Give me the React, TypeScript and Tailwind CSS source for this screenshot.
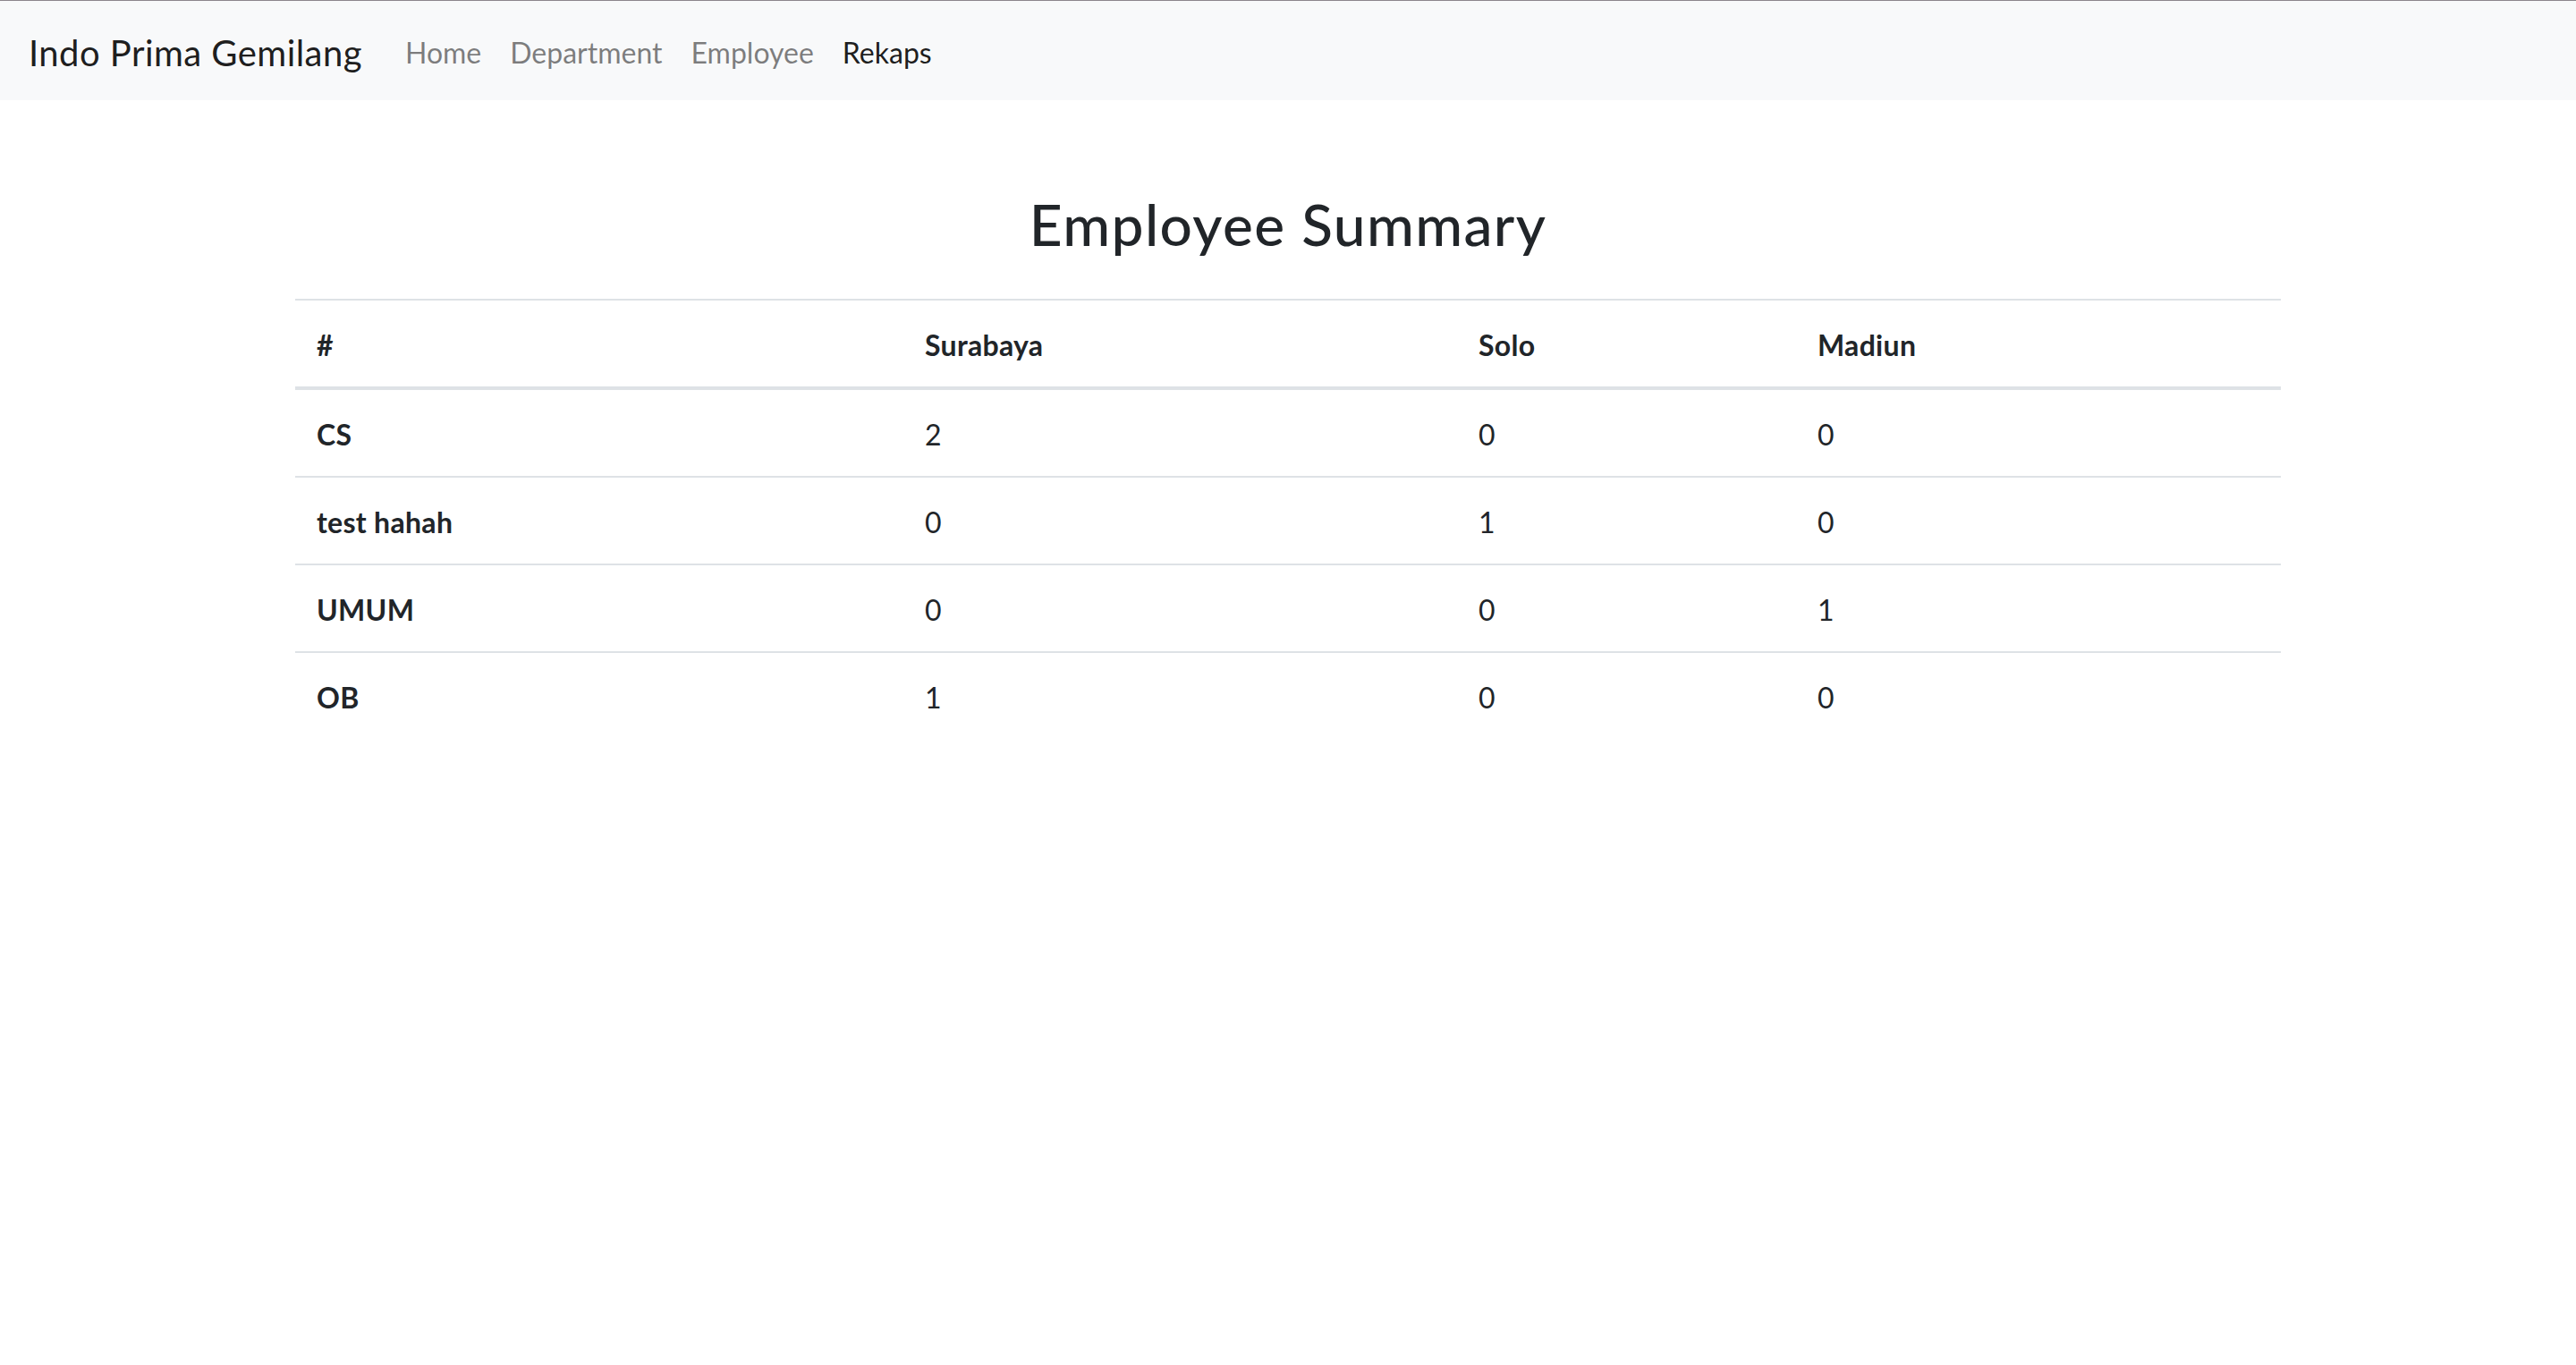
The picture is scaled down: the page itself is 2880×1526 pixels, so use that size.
import React from "react";

const font = { fontFamily: "Lato, 'Noto Sans', sans-serif" };

const links = [
  { name: "Home", active: false },
  { name: "Department", active: false },
  { name: "Employee", active: false },
  { name: "Rekaps", active: true },
];

const cities = ["Surabaya", "Solo", "Madiun"];

const rows = [
  { dept: "CS", counts: [2, 0, 0] },
  { dept: "test hahah", counts: [0, 1, 0] },
  { dept: "UMUM", counts: [0, 0, 1] },
  { dept: "OB", counts: [1, 0, 0] },
];

const colWidths = ["w-[680px]", "w-[619px]", "w-[379px]", "w-[542px]"];

function Navbar() {
  return (
    <nav className="flex h-[112px] items-center border-t border-[#8c868c] bg-[#f8f9fa] px-[32px]">
      <a className="mr-[32px] pt-[12px] pb-[8px] text-[40px] leading-[60px] tracking-[0.45px] text-black/90">
        Indo Prima Gemilang
      </a>
      <ul className="flex items-center">
        {links.map((l) => (
          <li key={l.name}>
            <a
              className={
                l.active
                  ? "block px-[16px] pt-[18px] pb-[14px] text-[32px] leading-[48px] text-black/90"
                  : "block px-[16px] pt-[18px] pb-[14px] text-[32px] leading-[48px] text-black/50"
              }
            >
              {l.name}
            </a>
          </li>
        ))}
      </ul>
    </nav>
  );
}

export default function App() {
  return (
    <div className="min-h-screen bg-white text-[#212529]" style={font}>
      <Navbar />
      <div className="mx-auto w-[2280px] px-[30px]">
        <h2 className="mt-[100px] text-center text-[64px] font-medium leading-[77px] tracking-[1.4px]">
          Employee Summary
        </h2>
        <table className="mt-[45px] w-full table-fixed border-collapse text-[32px] leading-[48px] tracking-[0.3px]">
          <colgroup>
            {colWidths.map((w, i) => (
              <col key={i} className={w} />
            ))}
          </colgroup>
          <thead>
            <tr>
              <th className="border-t-2 border-b-4 border-[#dee2e6] px-[24px] pt-[26px] pb-[22px] text-left font-bold">#</th>
              {cities.map((c) => (
                <th
                  key={c}
                  className="border-t-2 border-b-4 border-[#dee2e6] px-[24px] pt-[26px] pb-[22px] text-left font-bold"
                >
                  {c}
                </th>
              ))}
            </tr>
          </thead>
          <tbody>
            {rows.map((r) => (
              <tr key={r.dept}>
                <th className="border-t-2 border-[#dee2e6] px-[24px] pt-[26px] pb-[22px] text-left font-bold">
                  {r.dept}
                </th>
                {r.counts.map((n, i) => (
                  <td key={i} className="border-t-2 border-[#dee2e6] px-[24px] pt-[26px] pb-[22px]">
                    {n}
                  </td>
                ))}
              </tr>
            ))}
          </tbody>
        </table>
      </div>
    </div>
  );
}
